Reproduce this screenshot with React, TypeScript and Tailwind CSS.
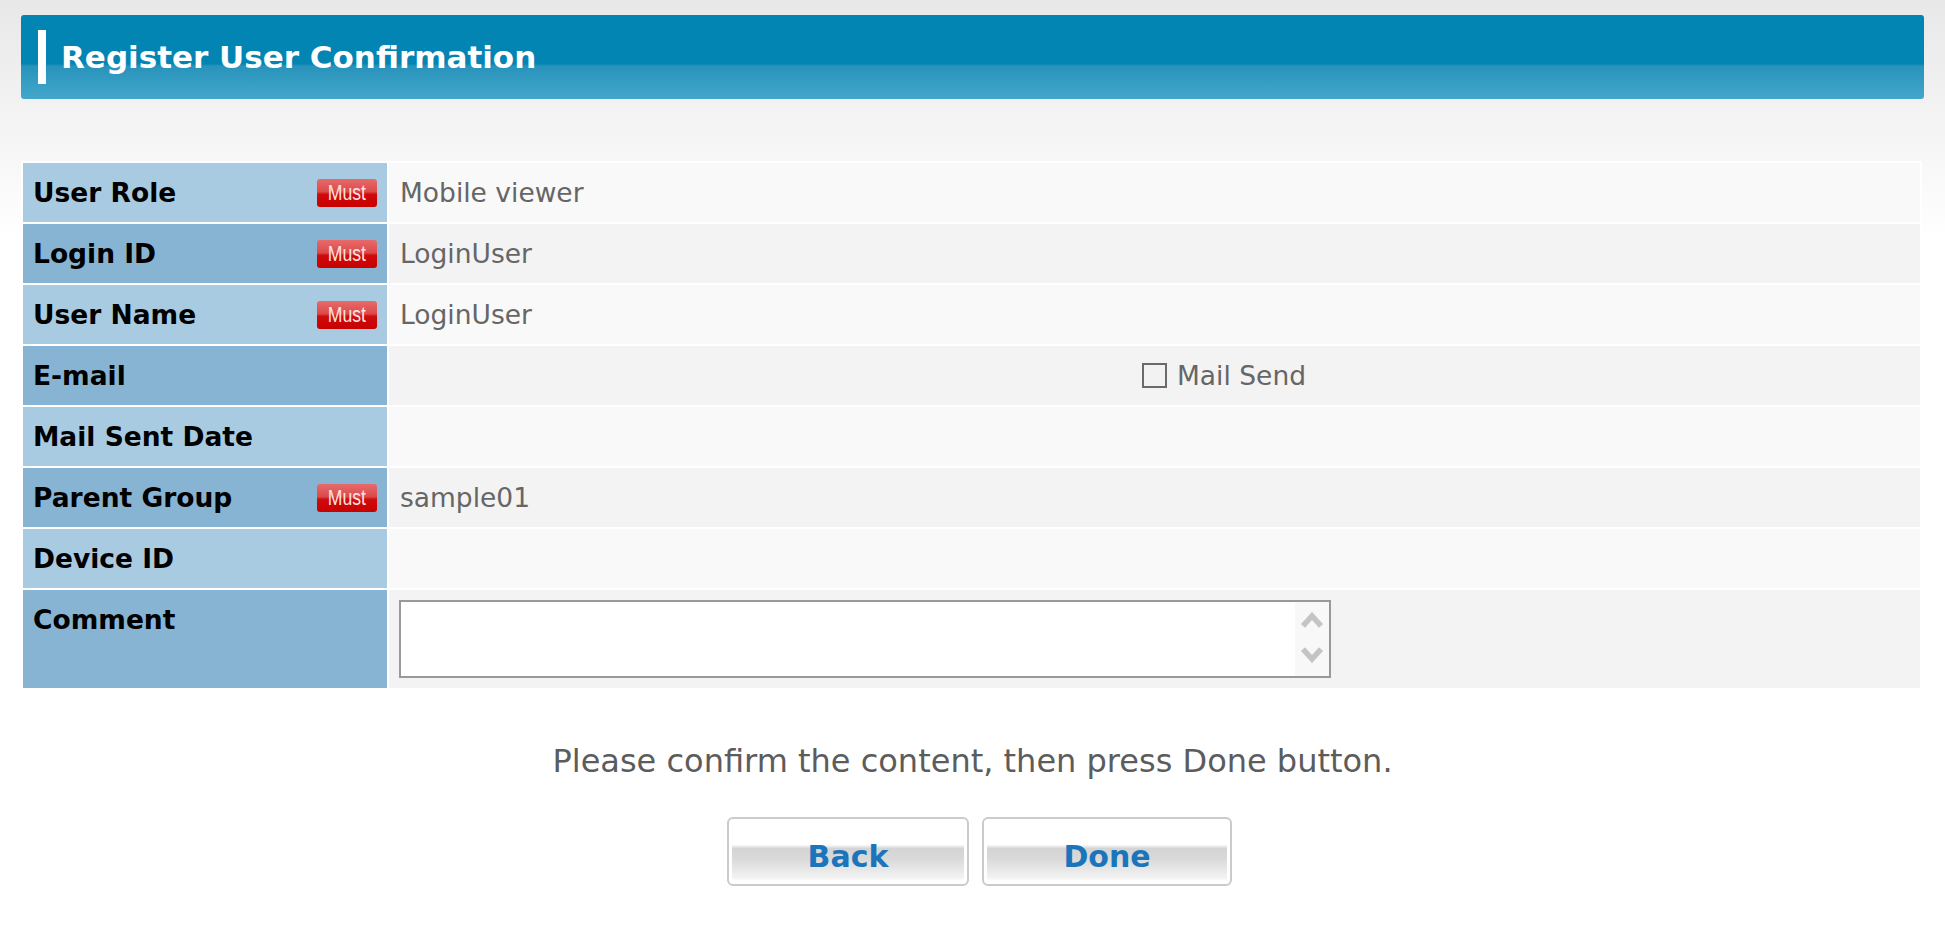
import React from 'react';

interface Row {
  readonly label: string;
  readonly must?: boolean;
  readonly value?: string;
  readonly kind?: 'text' | 'mail' | 'comment';
}

const rows: Array<Row> = [
  { label: 'User Role', must: true, value: 'Mobile viewer' },
  { label: 'Login ID', must: true, value: 'LoginUser' },
  { label: 'User Name', must: true, value: 'LoginUser' },
  { label: 'E-mail', kind: 'mail' },
  { label: 'Mail Sent Date' },
  { label: 'Parent Group', must: true, value: 'sample01' },
  { label: 'Device ID' },
  { label: 'Comment', kind: 'comment' },
];

function MustBadge() {
  return (
    <span className="flex h-[28px] w-[60px] items-center justify-center overflow-hidden rounded-[3px] bg-[linear-gradient(to_bottom,#e76b6b_0%,#dc4a4a_45%,#cf0b0b_55%,#c80000_100%)]">
      <span className="scale-x-[0.8] font-['Liberation_Sans',sans-serif] text-[22px] leading-none text-[#ffe2e2]">
        Must
      </span>
    </span>
  );
}

function Chevron({ up }: { up: boolean }) {
  return (
    <svg width="22" height="16" viewBox="0 0 22 16">
      <polyline
        points={up ? '2,14 11,4 20,14' : '2,2 11,12 20,2'}
        fill="none"
        stroke="#c4c4c4"
        strokeWidth="5.5"
      />
    </svg>
  );
}

function CommentBox() {
  return (
    <div className="flex h-[78px] w-[932px] border-2 border-[#999999] bg-white">
      <div className="flex-1" />
      <div className="flex w-[34px] flex-col items-center justify-between bg-[#f8f8f8] pt-[10px] pb-[13px]">
        <Chevron up />
        <Chevron up={false} />
      </div>
    </div>
  );
}

function Button({ label, width }: { label: string; width: string }) {
  return (
    <button
      type="button"
      className={`${width} h-[69px] rounded-[6px] border-2 border-[#cbcbcb] bg-white p-[3px]`}
    >
      <div className="flex h-full items-center justify-center rounded-[3px] bg-[linear-gradient(to_bottom,#ffffff_0%,#ffffff_38%,#d4d4d4_45%,#d9d9d9_62%,#f3f3f3_95%,#ffffff_100%)] pt-[9px] text-[30px] font-bold text-[#1b75bb]">
        {label}
      </div>
    </button>
  );
}

export default function App() {
  return (
    <div className="min-h-[925px] bg-[linear-gradient(to_bottom,#e8e8e8_0px,#ffffff_240px)] px-[21px] pt-[15px] font-['DejaVu_Sans',sans-serif]">
      <div className="flex h-[84px] items-center rounded-[3px] bg-[linear-gradient(to_bottom,#0385b3_0%,#0385b3_58%,#2893bb_61%,#44a7ca_100%)] pl-[17px]">
        <div className="h-[54px] w-[8px] bg-white" />
        <h1 className="ml-[15px] text-[31px] font-bold text-white">Register User Confirmation</h1>
      </div>

      <table className="mt-[62px] w-[calc(100%-2px)] border-separate border-spacing-[2px] bg-white">
        <tbody>
          {rows.map((row, i) => {
            const even = i % 2 === 1;
            const isComment = row.kind === 'comment';
            return (
              <tr key={row.label}>
                <td
                  className={`${even ? 'bg-[#87b4d3]' : 'bg-[#a9cbe1]'} w-[364px] p-0 align-top ${
                    isComment ? 'h-[98px]' : 'h-[59px]'
                  }`}
                >
                  <div className="flex h-[59px] items-center justify-between pr-[10px] pl-[10px]">
                    <span className="text-[26.5px] font-bold text-black">{row.label}</span>
                    {row.must && <MustBadge />}
                  </div>
                </td>
                <td className={`${even ? 'bg-[#f3f3f3]' : 'bg-[#f9f9f9]'} p-0 align-middle`}>
                  {row.kind === 'mail' ? (
                    <div className="flex items-center gap-[10px] pl-[753px]">
                      <span className="h-[25px] w-[25px] border-2 border-[#6a6a6a] bg-[#f2f2f2]" />
                      <span className="text-[26.5px] text-[#666666]">Mail Send</span>
                    </div>
                  ) : isComment ? (
                    <div className="py-[10px] pl-[10px]">
                      <CommentBox />
                    </div>
                  ) : (
                    <span className="pl-[11px] text-[26.5px] text-[#666666]">{row.value}</span>
                  )}
                </td>
              </tr>
            );
          })}
        </tbody>
      </table>

      <p className="mt-[53px] text-center text-[32px] leading-[37px] text-[#5c5c5c]">
        Please confirm the content, then press Done button.
      </p>

      <div className="mt-[37px] flex justify-center gap-[13px] pl-[14px]">
        <Button label="Back" width="w-[242px]" />
        <Button label="Done" width="w-[250px]" />
      </div>
    </div>
  );
}
